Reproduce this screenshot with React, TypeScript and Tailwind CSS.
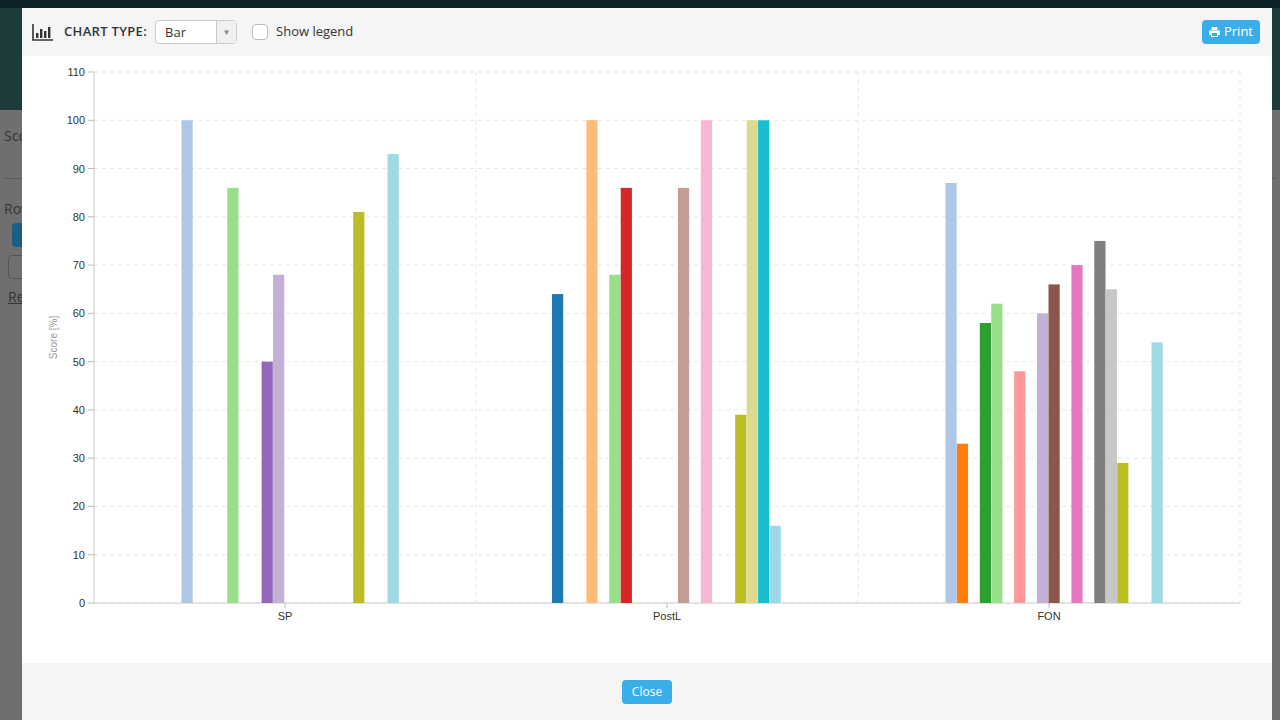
import React from "react";

const COLORS = ["#1f77b4","#aec7e8","#ff7f0e","#ffbb78","#2ca02c","#98df8a","#d62728","#ff9896","#9467bd","#c5b0d5","#8c564b","#c49c94","#e377c2","#f7b6d2","#7f7f7f","#c7c7c7","#bcbd22","#dbdb8d","#17becf","#9edae5"];

// value per series index for each group
const GROUPS: { label: string; vals: Record<number, number> }[] = [
  { label: "SP", vals: { 1: 100, 5: 86, 8: 50, 9: 68, 16: 81, 19: 93 } },
  { label: "PostL", vals: { 0: 64, 3: 100, 5: 68, 6: 86, 11: 86, 13: 100, 16: 39, 17: 100, 18: 100, 19: 16 } },
  { label: "FON", vals: { 1: 87, 2: 33, 4: 58, 5: 62, 7: 48, 9: 60, 10: 66, 12: 70, 14: 75, 15: 65, 16: 29, 19: 54 } },
];

const X0 = 72, GW = 382, Y0 = 547, YT = 16;
const yOf = (v: number) => Y0 - (v / 110) * (Y0 - YT);

function Chart() {
  const ticks = Array.from({ length: 12 }, (_, i) => i * 10);
  return (
    <svg width="1250" height="607" className="block" style={{ fontFamily: "Liberation Sans, Arial, sans-serif" }}>
      {ticks.map((t) => (
        <g key={t}>
          <line x1={X0} x2={X0 + GW * 3} y1={yOf(t)} y2={yOf(t)} stroke="#e6e6e6" strokeDasharray="4 4" />
          <line x1={X0 - 6} x2={X0} y1={yOf(t)} y2={yOf(t)} stroke="#bbb" />
          <text x={X0 - 9} y={yOf(t) + 4} fontSize="11" textAnchor="end" fill="#333">{t}</text>
        </g>
      ))}
      {[1, 2, 3].map((g) => (
        <line key={g} x1={X0 + GW * g} x2={X0 + GW * g} y1={YT} y2={Y0} stroke="#e6e6e6" strokeDasharray="4 4" />
      ))}
      <line x1={X0} x2={X0} y1={YT} y2={Y0} stroke="#ccc" />
      <line x1={X0} x2={X0 + GW * 3} y1={Y0} y2={Y0} stroke="#ccc" />
      {GROUPS.map((g, gi) => (
        <g key={g.label}>
          {Object.entries(g.vals).map(([k, v]) => {
            const i = Number(k);
            const x = X0 + gi * GW + 76 + i * 11.45;
            return <rect key={k} x={x} y={yOf(v)} width={11.2} height={Y0 - yOf(v)} fill={COLORS[i]} />;
          })}
          <line x1={X0 + gi * GW + GW / 2} x2={X0 + gi * GW + GW / 2} y1={Y0} y2={Y0 + 5} stroke="#bbb" />
          <text x={X0 + gi * GW + GW / 2} y={Y0 + 17} fontSize="11" textAnchor="middle" fill="#333">{g.label}</text>
        </g>
      ))}
      <text transform={`translate(35 ${(Y0 + YT) / 2}) rotate(-90)`} fontSize="10" textAnchor="middle" fill="#999">Score [%]</text>
    </svg>
  );
}

export default function App() {
  return (
    <div className="relative w-[1280px] h-[720px] overflow-hidden bg-[#6f6f6f]" style={{ fontFamily: "'Open Sans', sans-serif" }}>
      {/* dimmed page behind */}
      <div className="h-2 bg-[#0c2128]" />
      <div className="h-[102px] bg-[#1c3b3a]" />
      <div className="px-1 pt-4 text-[#333] text-sm">
        <p>Sco</p>
        <div className="border-t border-[#5a5a5a] mt-8 pt-5">Row</div>
        <div className="mt-1 ml-2 w-6 h-6 bg-[#1b5f86] rounded-sm" />
        <div className="mt-2 ml-1 w-6 h-6 border border-[#555] rounded-sm" />
        <p className="mt-2 ml-1 underline">Re</p>
      </div>

      <div className="absolute left-[22px] top-[8px] w-[1250px] h-[712px] bg-white flex flex-col">
        <div className="h-[48px] bg-[#f5f5f5] flex items-center pl-[10px] pr-[12px]">
          <svg width="22" height="18" viewBox="0 0 22 18" className="mr-[10px]">
            <path d="M1 1v16h20" stroke="#333" strokeWidth="1.6" fill="none" />
            <rect x="4" y="10" width="2.4" height="5" fill="#333" />
            <rect x="8" y="6" width="2.4" height="9" fill="#333" />
            <rect x="12" y="8" width="2.4" height="7" fill="#333" />
            <rect x="16" y="4" width="2.4" height="11" fill="#333" />
          </svg>
          <span className="text-[13px] font-semibold text-[#333] tracking-wide">CHART TYPE:</span>
          <div className="ml-[8px] flex w-[82px] h-[24px] border border-[#ccc] rounded-sm bg-white">
            <span className="flex-1 text-[13px] text-[#333] pl-[9px] leading-[22px]">Bar</span>
            <span className="w-[20px] border-l border-[#ccc] bg-[#f0f0f0] text-[8px] text-[#888] flex items-center justify-center">▼</span>
          </div>
          <div className="ml-[15px] w-[16px] h-[16px] border border-[#bbb] rounded-sm bg-white" />
          <span className="ml-[8px] text-[13px] text-[#333]">Show legend</span>
          <button className="ml-auto h-[24px] px-[7px] bg-[#3aaee8] text-white text-[13px] rounded-sm flex items-center gap-1">
            <svg width="11" height="10" viewBox="0 0 11 10"><path d="M2.5 0h6v3h-6z M0 3.5h11v4.5h-2v2h-7v-2h-2z" fill="#fff" /><rect x="3" y="6" width="5" height="3" fill="#3aaee8" /></svg>
            Print
          </button>
        </div>
        <div className="flex-1">
          <Chart />
        </div>
        <div className="h-[57px] bg-[#f5f5f5] flex items-center justify-center">
          <button className="h-[24px] px-[10px] bg-[#3aaee8] text-white text-[12px] rounded-sm">Close</button>
        </div>
      </div>
    </div>
  );
}
